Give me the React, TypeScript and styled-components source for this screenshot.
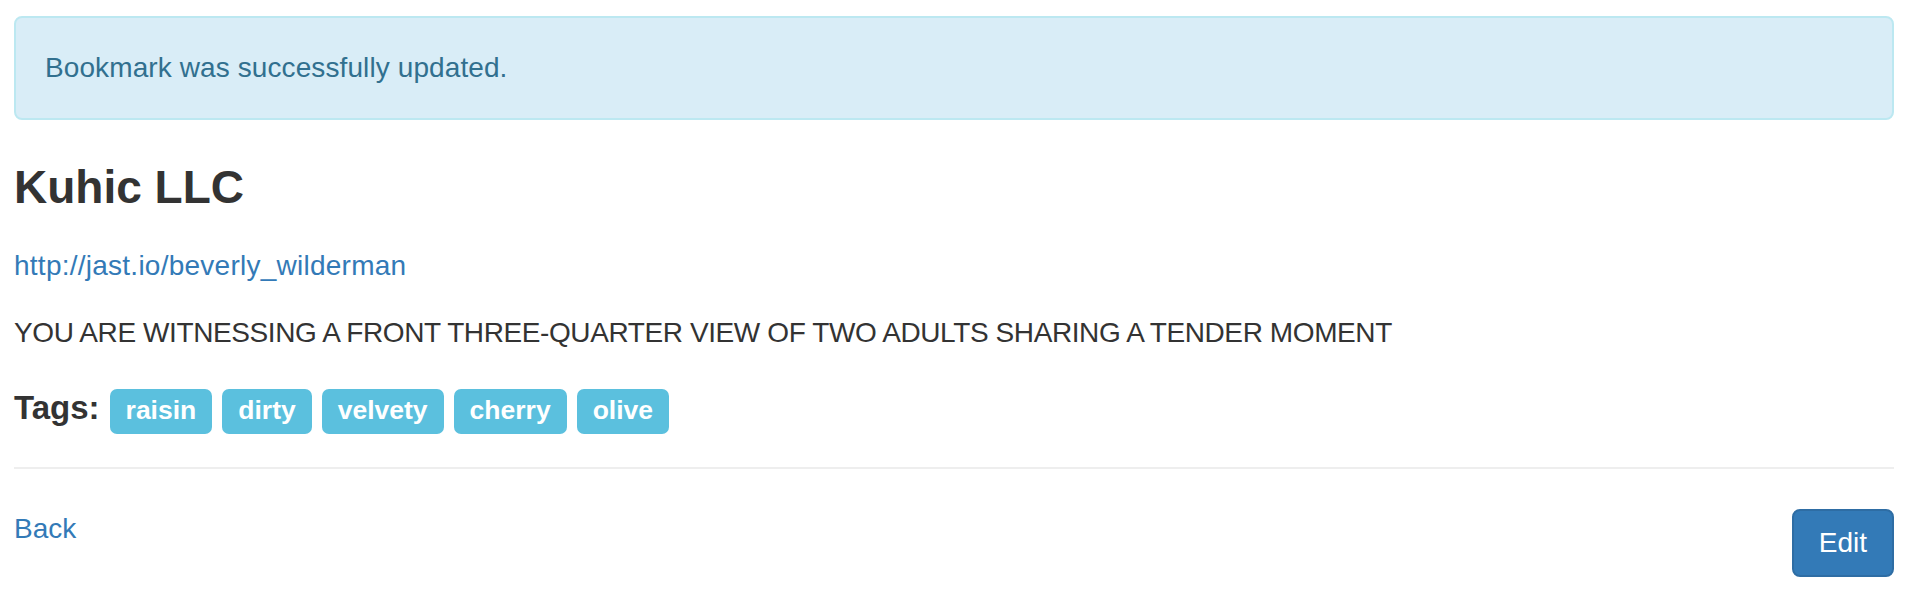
import React from "react";
import styled, { createGlobalStyle } from "styled-components";

const GlobalStyle = createGlobalStyle`
  html, body {
    margin: 0;
    padding: 0;
    background: #ffffff;
  }
  body {
    font-family: "Liberation Sans", Arial, Helvetica, sans-serif;
    font-size: 28px;
    line-height: 40px;
    color: #333333;
  }
  * { box-sizing: border-box; }
`;

const Page = styled.main`
  display: flex;
  flex-direction: column;
  padding: 16px 16px 0 14px;
`;

const Alert = styled.div`
  background: #d9edf7;
  border: 2px solid #bce8f1;
  border-radius: 8px;
  color: #31708f;
  padding: 30px 29px;
  font-size: 28px;
  line-height: 40px;
  letter-spacing: 0.1px;
  margin-bottom: 41px;
`;

const Title = styled.h3`
  margin: 0 0 33px;
  font-size: 46px;
  line-height: 52px;
  font-weight: 700;
  color: #333333;
`;

const Link = styled.a<{ $spacing?: number }>`
  color: #337ab7;
  text-decoration: none;
  font-size: 28px;
  line-height: 40px;
  letter-spacing: ${(p) => p.$spacing ?? 0}px;
`;

const Paragraph = styled.p<{ $gap: number; $spacing?: number }>`
  margin: 0 0 ${(p) => p.$gap}px;
  font-size: 28px;
  line-height: 40px;
  letter-spacing: ${(p) => p.$spacing ?? 0}px;
`;

const TagRow = styled.div`
  display: flex;
  align-items: baseline;
  gap: 10px;
`;

const TagLabel = styled.span`
  font-size: 33px;
  line-height: 40px;
  font-weight: 700;
  color: #333333;
`;

const Badge = styled.span`
  display: inline-block;
  background: #5bc0de;
  color: #ffffff;
  font-size: 26.5px;
  line-height: 27px;
  font-weight: 700;
  padding: 8px 16px 10px;
  border-radius: 7px;
`;

const Rule = styled.hr`
  margin: 33px 0 40px;
  border: 0;
  border-top: 2px solid #eeeeee;
  height: 0;
`;

const Footer = styled.div`
  display: flex;
  justify-content: space-between;
  align-items: flex-start;
`;

const Button = styled.button`
  font-family: inherit;
  font-size: 28px;
  line-height: 40px;
  padding: 12px 25px;
  color: #ffffff;
  background: #337ab7;
  border: 2px solid #2e6da4;
  border-radius: 8px;
  cursor: pointer;
`;

const tags = ["raisin", "dirty", "velvety", "cherry", "olive"];

export default function App() {
  return (
    <>
      <GlobalStyle />
      <Page>
        <Alert>Bookmark was successfully updated.</Alert>
        <Title>Kuhic LLC</Title>
        <Paragraph $gap={27}>
          <Link href="#" $spacing={0.25}>http://jast.io/beverly_wilderman</Link>
        </Paragraph>
        <Paragraph $gap={35} $spacing={-0.4}>
          YOU ARE WITNESSING A FRONT THREE-QUARTER VIEW OF TWO ADULTS SHARING A TENDER MOMENT
        </Paragraph>
        <TagRow>
          <TagLabel>Tags:</TagLabel>
          {tags.map((t) => (
            <Badge key={t}>{t}</Badge>
          ))}
        </TagRow>
        <Rule />
        <Footer>
          <Link href="#">Back</Link>
          <Button type="button">Edit</Button>
        </Footer>
      </Page>
    </>
  );
}
